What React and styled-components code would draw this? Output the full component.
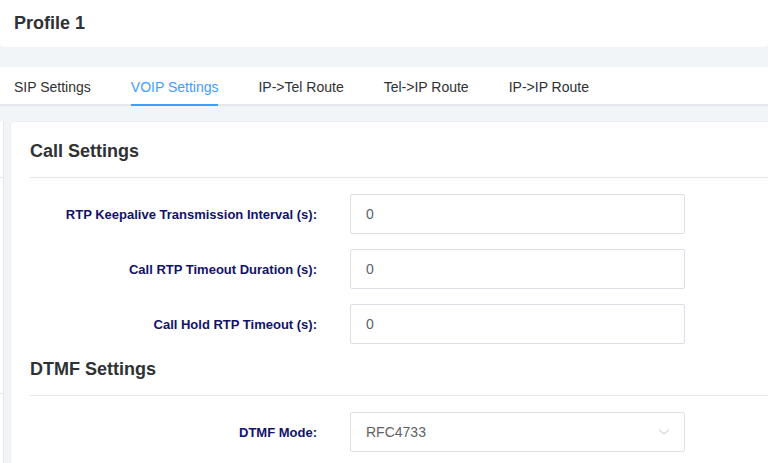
import React from 'react'
import styled, { createGlobalStyle } from 'styled-components'

const Global = createGlobalStyle`
  html, body {
    margin: 0;
    padding: 0;
    background: #f2f5f8;
    font-family: "Liberation Sans", Arial, sans-serif;
    overflow: hidden;
  }
`

const Page = styled.div`
  width: 768px;
  height: 463px;
  display: flex;
  flex-direction: column;
  overflow: hidden;
`

const Header = styled.div`
  height: 47px;
  background: #fff;
  border-radius: 0 0 4px 4px;
  display: flex;
  align-items: center;
  padding-left: 14px;
  font-size: 18px;
  font-weight: bold;
  color: #303133;
  flex-shrink: 0;
`

const TabBar = styled.div`
  margin-top: 20px;
  height: 37px;
  background: #fff;
  border-bottom: 2px solid #e4e7ed;
  display: flex;
  padding-left: 14px;
  flex-shrink: 0;
`

const Tab = styled.div`
  position: relative;
  padding: 0 20px;
  line-height: 41px;
  font-size: 14px;
  color: ${({ active }) => (active ? '#409eff' : '#303133')};
  &:first-child {
    padding-left: 0;
  }
  &::after {
    content: '';
    display: ${({ active }) => (active ? 'block' : 'none')};
    position: absolute;
    left: 20px;
    right: 20px;
    bottom: -2px;
    height: 2px;
    background: #409eff;
  }
`

const Main = styled.div`
  margin-top: 15px;
  display: flex;
  gap: 6px;
  flex-shrink: 0;
`

const Side = styled.div`
  width: 3px;
  background: #fff;
  border-right: 1px solid #e4e7ed;
  flex-shrink: 0;
  display: flex;
  flex-direction: column;
`

const SideLine = styled.div`
  height: ${({ h }) => h}px;
  border-bottom: 1px solid #e4e7ed;
  flex-shrink: 0;
`

const Card = styled.div`
  flex: 1;
  margin-right: -10px;
  min-height: 400px;
  background: #fff;
  border: 1px solid #ebeef5;
  border-radius: 4px;
  padding: 0 0 0 19px;
`

const SectionTitle = styled.div`
  padding-top: ${({ top }) => top}px;
  padding-bottom: 14px;
  line-height: 24px;
  font-size: 18px;
  font-weight: bold;
  color: #303133;
  border-bottom: 1px solid #e4e7ed;
`

const Form = styled.div`
  padding-top: 16px;
  display: flex;
  flex-direction: column;
  gap: 15px;
`

const Row = styled.div`
  display: flex;
  align-items: center;
`

const Label = styled.label`
  width: 320px;
  padding-right: 33px;
  box-sizing: border-box;
  text-align: right;
  font-size: 13px;
  font-weight: bold;
  color: #12126b;
`

const Input = styled.div`
  width: 335px;
  height: 40px;
  box-sizing: border-box;
  border: 1px solid #dcdfe6;
  border-radius: 2px;
  padding: 0 14px 0 15px;
  display: flex;
  align-items: center;
  justify-content: space-between;
  font-size: 14px;
  color: #606266;
`

const Arrow = () => (
  <svg width="12" height="8" viewBox="0 0 12 8">
    <polyline points="1,1.5 6,6 11,1.5" fill="none" stroke="#c0c4cc" strokeWidth="1" />
  </svg>
)

const tabs = ['SIP Settings', 'VOIP Settings', 'IP->Tel Route', 'Tel->IP Route', 'IP->IP Route']

const callRows = [
  'RTP Keepalive Transmission Interval (s):',
  'Call RTP Timeout Duration (s):',
  'Call Hold RTP Timeout (s):',
]

export default function App() {
  return (
    <Page>
      <Global />
      <Header>Profile 1</Header>
      <TabBar>
        {tabs.map(t => (
          <Tab key={t} active={t === 'VOIP Settings'}>{t}</Tab>
        ))}
      </TabBar>
      <Main>
        <Side>
          <SideLine h={56} />
          <SideLine h={215} />
        </Side>
        <Card>
          <SectionTitle top={17}>Call Settings</SectionTitle>
          <Form>
            {callRows.map(l => (
              <Row key={l}>
                <Label>{l}</Label>
                <Input>0</Input>
              </Row>
            ))}
          </Form>
          <SectionTitle top={13}>DTMF Settings</SectionTitle>
          <Form>
            <Row>
              <Label>DTMF Mode:</Label>
              <Input>RFC4733<Arrow /></Input>
            </Row>
          </Form>
        </Card>
      </Main>
    </Page>
  )
}
